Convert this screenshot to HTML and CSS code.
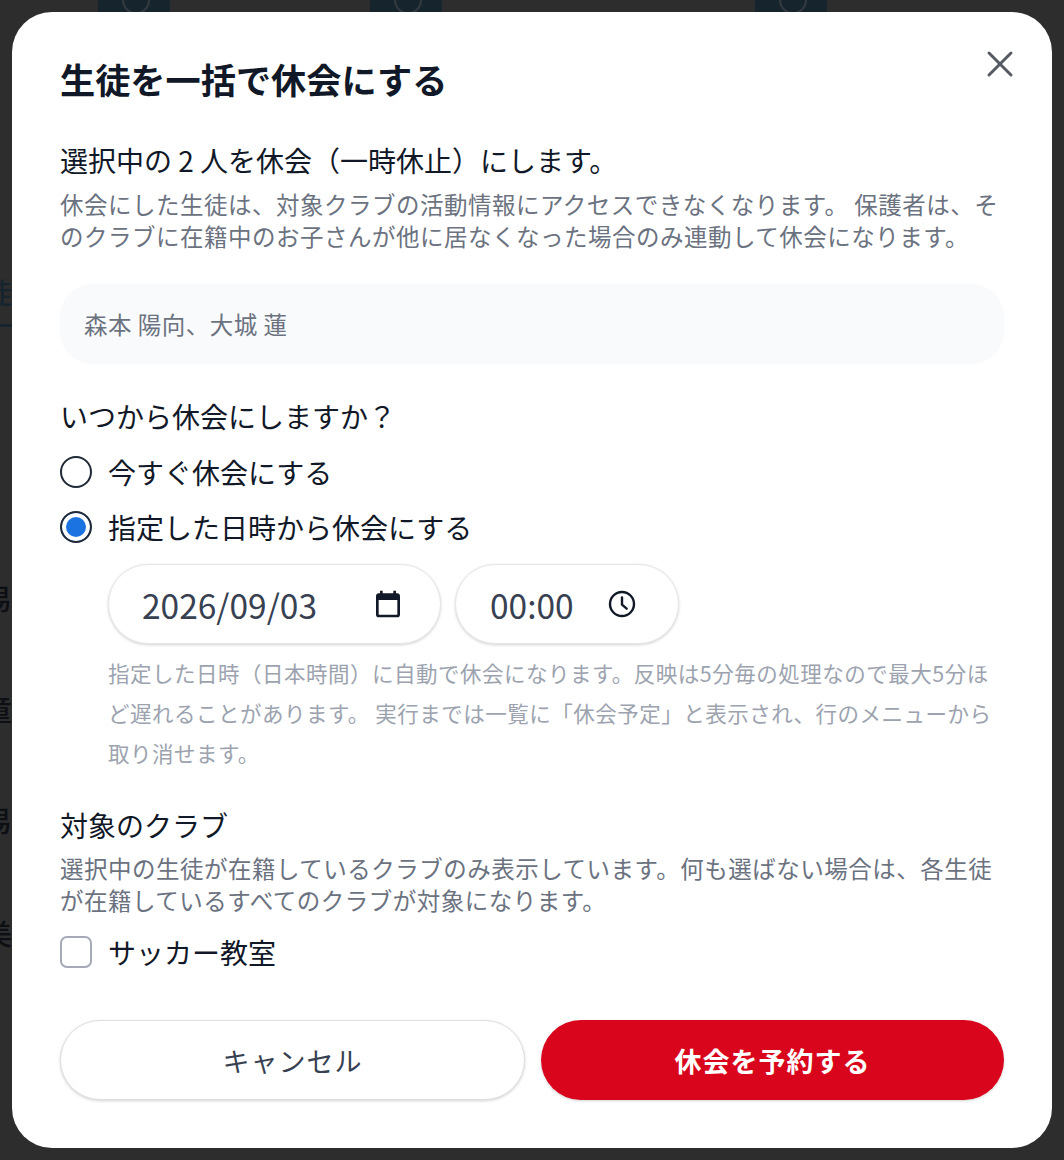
FILE: index.html

```html
<!DOCTYPE html>
<html lang="ja">
<head>
  <meta charset="UTF-8">
  <title>生徒を一括で休会にする</title>
  <link rel="stylesheet" href="styles.css">
</head>
<body>

  <!-- dimmed page behind the dialog -->
  <div class="backdrop" aria-hidden="true">
    <span class="bg-avatar bg-avatar-1"></span>
    <span class="bg-avatar bg-avatar-2"></span>
    <span class="bg-avatar bg-avatar-3"></span>
    <span class="bg-char bg-char-1">徒</span>
    <span class="bg-rule"></span>
    <span class="bg-char bg-char-2">易</span>
    <span class="bg-char bg-char-3">童</span>
    <span class="bg-char bg-char-4">易</span>
    <span class="bg-char bg-char-5">美</span>
  </div>

  <div class="modal">
    <button class="close" aria-label="閉じる">
      <svg width="36" height="36" viewBox="0 0 36 36" fill="none" stroke="#555a63" stroke-width="3" stroke-linecap="round">
        <path d="M7 7 L29 29 M29 7 L7 29"/>
      </svg>
    </button>

    <h1>生徒を一括で休会にする</h1>

    <p class="lead">選択中の 2 人を休会（一時休止）にします。</p>
    <p class="note">休会にした生徒は、対象クラブの活動情報にアクセスできなくなります。 保護者は、そのクラブに在籍中のお子さんが他に居なくなった場合のみ連動して休会になります。</p>

    <div class="names">森本 陽向、大城 蓮</div>

    <p class="question">いつから休会にしますか？</p>

    <div class="option">
      <span class="radio"></span>
      <span>今すぐ休会にする</span>
    </div>
    <div class="option">
      <span class="radio checked"></span>
      <span>指定した日時から休会にする</span>
    </div>

    <div class="schedule">
      <div class="fields">
        <div class="field field-date">
          <span>2026/09/03</span>
          <svg width="32" height="32" viewBox="0 0 24 24" fill="#111827">
            <path d="M19 4h-1V2h-2v2H8V2H6v2H5c-1.100 0-2 .9-2 2v14c0 1.100.9 2 2 2h14c1.100 0 2-.9 2-2V6c0-1.100-.9-2-2-2zm0 16H5V9h14v11z"/>
          </svg>
        </div>
        <div class="field field-time">
          <span>00:00</span>
          <svg width="32" height="32" viewBox="0 0 24 24" fill="none" stroke="#111827" stroke-width="1.800" stroke-linecap="round" stroke-linejoin="round">
            <circle cx="12" cy="12" r="9"/>
            <path d="M12 7v5.500l3.500 3"/>
          </svg>
        </div>
      </div>
      <p class="hint">指定した日時（日本時間）に自動で休会になります。反映は5分毎の処理なので最大5分ほど遅れることがあります。 実行までは一覧に「休会予定」と表示され、行のメニューから取り消せます。</p>
    </div>

    <p class="lead club-title">対象のクラブ</p>
    <p class="note">選択中の生徒が在籍しているクラブのみ表示しています。何も選ばない場合は、各生徒が在籍しているすべてのクラブが対象になります。</p>

    <div class="option club-option">
      <span class="checkbox"></span>
      <span>サッカー教室</span>
    </div>

    <div class="actions">
      <button class="btn btn-cancel">キャンセル</button>
      <button class="btn btn-submit">休会を予約する</button>
    </div>
  </div>

</body>
</html>
```

FILE: styles.css

```css
* { box-sizing: border-box; }

html, body { margin: 0; height: 1160px; overflow: hidden; }

body {
  position: relative;
  padding: 12px;
  background: #2d2d2d;
  font-family: "Noto Sans CJK JP", "Noto Sans", sans-serif;
  color: #111827;
}

p { margin: 0; }

/* page behind the dialog */
.backdrop { position: absolute; inset: 0; overflow: hidden; }
.bg-avatar { position: absolute; top: 0; width: 72px; height: 12px; background: #16242e; overflow: hidden; }
.bg-avatar::before {
  content: "";
  position: absolute;
  left: 24px;
  top: -14px;
  width: 24px;
  height: 24px;
  border: 2px solid #343a40;
  border-radius: 50%;
}
.bg-avatar-1 { left: 98px; }
.bg-avatar-2 { left: 370px; }
.bg-avatar-3 { left: 755px; }
.bg-char { position: absolute; left: -16px; font-size: 28px; font-weight: 500; line-height: 40px; color: #0c0f13; }
.bg-char-1 { top: 272px; color: #16242e; }
.bg-char-2 { top: 578px; }
.bg-char-3 { top: 689px; }
.bg-char-4 { top: 800px; }
.bg-char-5 { top: 913px; }
.bg-rule { position: absolute; left: 0; top: 324px; width: 12px; height: 3px; background: #16242e; }

/* dialog */
.modal {
  position: relative;
  height: 1136px;
  padding: 41px 48px 0;
  background: #fff;
  border-radius: 40px;
}

.close {
  position: absolute;
  top: 34px;
  right: 34px;
  width: 36px;
  height: 36px;
  padding: 0;
  border: 0;
  background: none;
}

h1 {
  margin: 0;
  font-size: 35.200px;
  line-height: 52px;
  font-weight: 700;
}

.lead, .question, .option {
  font-size: 28px;
  line-height: 40px;
}

.lead { margin-top: 35px; }

.note {
  margin-top: 8px;
  font-size: 23.500px;
  line-height: 32px;
  letter-spacing: 0.500px;
  color: #6b7280;
}

.names {
  height: 80px;
  margin-top: 32px;
  padding-left: 24px;
  border-radius: 32px;
  background: #f9fafb;
  font-size: 23.500px;
  line-height: 80px;
  letter-spacing: 0.500px;
  color: #6b7280;
}

.question { margin: 32px 0 16px; }

.option {
  display: flex;
  align-items: center;
  gap: 16px;
  margin-top: 15px;
}

.radio {
  width: 32px;
  height: 32px;
  border: 2px solid #1f2937;
  border-radius: 50%;
  background: #fff;
}
.radio.checked {
  background: #1a73e0;
  box-shadow: inset 0 0 0 4px #fff;
}

.schedule { margin: 17px 0 0 48px; }
.fields { display: flex; gap: 14px; }

.field {
  display: flex;
  align-items: center;
  justify-content: space-between;
  height: 80px;
  border: 1px solid #e5e7eb;
  border-radius: 40px;
  background: #fff;
  box-shadow: 0 1px 3px rgba(0, 0, 0, .18);
  font-size: 33.500px;
  color: #374151;
}
.field-date { width: 333px; padding: 0 36px 0 33px; }
.field-time { width: 224px; padding: 0 40px 0 34px; }

.hint {
  margin-top: 9px;
  font-size: 21.500px;
  line-height: 40px;
  letter-spacing: 0.500px;
  color: #9ca3af;
}

.club-title { margin: 32px 0 -1px; }

.club-option { margin-top: 16px; }

.checkbox {
  width: 32px;
  height: 32px;
  border: 2px solid #a5a9b8;
  border-radius: 7px;
  background: #fff;
}

.actions {
  display: flex;
  gap: 16px;
  margin-top: 48px;
}

.btn {
  flex: 1;
  height: 80px;
  border-radius: 40px;
  font-family: inherit;
  font-size: 27px;
  letter-spacing: 1px;
  box-shadow: 0 1px 3px rgba(0, 0, 0, .18);
}
.btn-cancel {
  border: 1px solid #e0e0e0;
  background: #fff;
  color: #374151;
  font-weight: 400;
}
.btn-submit {
  border: 0;
  background: #d9051c;
  color: #fff;
  font-weight: 700;
}
```
